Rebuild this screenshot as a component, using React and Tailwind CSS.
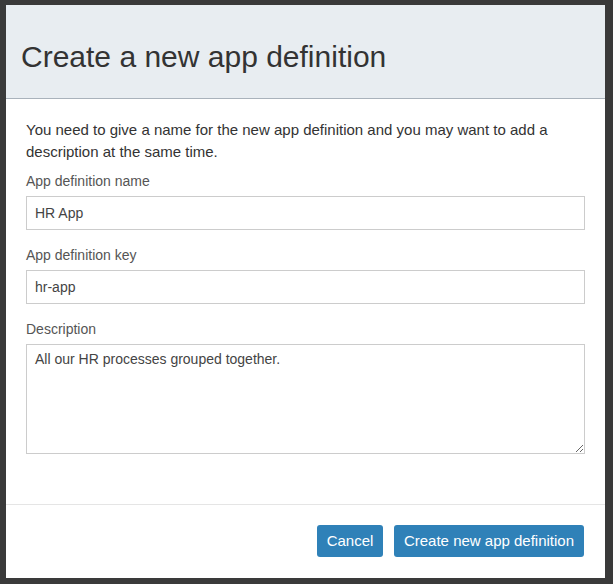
import { useState } from "react";

function Field({ label, children }) {
  return (
    <div className="mb-[15px]">
      <label className="block mb-[5px] text-[14px] leading-[20px] text-[#555]">
        {label}
      </label>
      {children}
    </div>
  );
}

function App() {
  const [formData, setFormData] = useState({
    name: "HR App",
    key: "hr-app",
    description: "All our HR processes grouped together.",
  });

  const handleChange = (e) => {
    const { name, value } = e.target;
    setFormData({ ...formData, [name]: value });
  };

  return (
    <div
      className="w-[613px] h-[584px] bg-[#3a3a3a] pt-[5px] pl-[6px]"
      style={{ fontFamily: '"Liberation Sans", Arial, sans-serif' }}
    >
      <div className="w-[599px] h-[573px] bg-white flex flex-col">
        <div className="h-[94px] bg-[#e8edf1] border-b border-[#a9b2bb] px-[15px] flex items-center">
          <h1 className="text-[30px] leading-[36px] text-[#333] pt-[10px]">
            Create a new app definition
          </h1>
        </div>

        <form className="flex-1 px-[20px] pt-[20px] text-[#333]">
          <p className="w-[540px] text-[15px] leading-[22px] mb-[8px]">
            You need to give a name for the new app definition and you may want
            to add a description at the same time.
          </p>
          <Field label="App definition name">
            <input
              name="name"
              value={formData.name}
              onChange={handleChange}
              className="block w-[559px] h-[34px] border border-[#ccc] px-[8px] text-[14px] text-[#444] outline-none"
            />
          </Field>
          <Field label="App definition key">
            <input
              name="key"
              value={formData.key}
              onChange={handleChange}
              className="block w-[559px] h-[34px] border border-[#ccc] px-[8px] text-[14px] text-[#444] outline-none"
            />
          </Field>
          <Field label="Description">
            <textarea
              name="description"
              value={formData.description}
              onChange={handleChange}
              className="block w-[559px] h-[110px] border border-[#ccc] px-[8px] py-[4px] text-[14px] leading-[20px] text-[#444] outline-none resize-y"
            />
          </Field>
        </form>

        <div className="h-[74px] border-t border-[#e5e5e5] flex justify-end items-start pt-[20px] pr-[21px] gap-[11px]">
          <button className="w-[66px] h-[32px] rounded-[3px] bg-[#2f81b8] text-white text-[15px]">
            Cancel
          </button>
          <button className="w-[190px] h-[32px] rounded-[3px] bg-[#2f81b8] text-white text-[15px]">
            Create new app definition
          </button>
        </div>
      </div>
    </div>
  );
}

export default App;
